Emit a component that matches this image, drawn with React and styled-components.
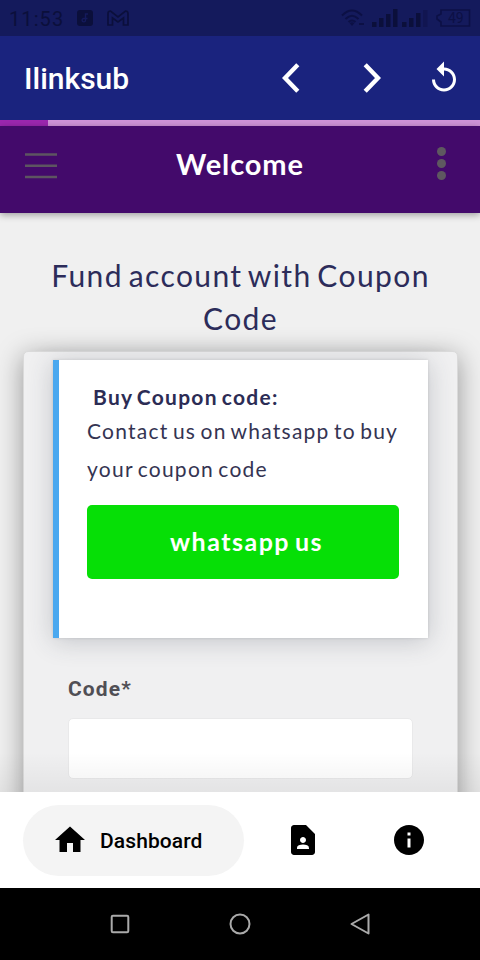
import React from 'react';
import styled, { createGlobalStyle } from 'styled-components';
import { MdContactPage, MdHome, MdInfo, MdReplay } from 'react-icons/md';

const StatusBar = () => (
  <Status>
    <Clock>11:53</Clock>
    <svg width="16" height="16" viewBox="0 0 16 16">
      <rect width="16" height="16" rx="3" fill="#0b0f3b" />
      <path d="M11 4H8.5v6.2M8.500 10.2a1.7 1.7 0 1 1-1.7-1.7h3.7" fill="none" stroke="#141a5c" strokeWidth="1.4" />
    </svg>
    <MailIcon width="22" height="16" viewBox="0 0 22 16">
      <path d="M1 15V3.500Q1 1 3.500 1L11 7 18.500 1Q21 1 21 3.500V15H16.500V8L11 12 5.500 8V15Z" />
    </MailIcon>
    <StatusRight>
      <svg width="24" height="18" viewBox="0 0 24 18">
        <path d="M1 6.500Q11 -3.500 21 6.500M4.500 10Q11 3.500 17.500 10M7.500 13Q11 10 14.500 13" fill="none" stroke="#0c1045" strokeWidth="2" />
        <path d="M8.500 14Q11 12.500 13.500 14L11 17Z" fill="#0c1045" />
        <path d="M18 15h5" stroke="#0c1045" strokeWidth="2" />
      </svg>
      <SignalBars width="56" height="20" viewBox="0 0 56 20">
        <path d="M0 14h4.500v5H0zM7 10h4.500v9H7zM14 6h4.500v13H14zM21 1h4.500v18H21zM30 14h4.500v5H30zM37 10h4.500v9H37zM44 5h4.500v14H44z" />
        <path d="M51 2h4.500v17H51z" opacity=".35" />
      </SignalBars>
      <Battery>
        <svg width="35" height="18" viewBox="0 0 35 18">
          <path d="M5 1H33.500V17H5V13L1 10V7L5 5Z" fill="none" stroke="#0c1045" strokeWidth="1.6" />
        </svg>
        <BatteryLevel>49</BatteryLevel>
      </Battery>
    </StatusRight>
  </Status>
);

const Chevron = ({ flip }) => (
  <ChevronIcon width="18" height="30" viewBox="0 0 18 30" $flip={flip}>
    <path d="M15.800 1.800 3 15 15.800 28.200" fill="none" stroke="#fff" strokeWidth="4.400" />
  </ChevronIcon>
);

const Toolbar = () => (
  <AppBar>
    <AppTitle>Ilinksub</AppTitle>
    <Actions>
      <Chevron />
      <Chevron flip />
      <MdReplay size={36} />
    </Actions>
  </AppBar>
);

const PageHeader = () => (
  <Header>
    <MenuIcon width="32" height="28" viewBox="0 0 32 28">
      <path d="M0 2.500h32M0 13.800h32M0 25h32" />
    </MenuIcon>
    <HeaderTitle>Welcome</HeaderTitle>
    <Dots>
      <i />
      <i />
      <i />
    </Dots>
  </Header>
);

const App = () => (
  <>
    <GlobalStyle />
    <Screen>
      <StatusBar />
      <Toolbar />
      <Progress><ProgressValue /></Progress>
      <PageHeader />
      <Content>
        <Heading>Fund account with Coupon Code</Heading>
        <Panel>
          <Notice>
            <NoticeTitle>Buy Coupon code:</NoticeTitle>
            <NoticeText>Contact us on whatsapp to buy your coupon code</NoticeText>
            <WhatsappButton type="button">whatsapp us</WhatsappButton>
          </Notice>
          <Label htmlFor="code">Code*</Label>
          <Input id="code" />
        </Panel>
        <BottomShade />
      </Content>
      <BottomNav>
        <ActiveTab>
          <MdHome size={36} />
          <span>Dashboard</span>
        </ActiveTab>
        <Tab><MdContactPage size={36} /></Tab>
        <Tab><MdInfo size={36} /></Tab>
      </BottomNav>
      <SystemNav>
        <svg width="20" height="20" viewBox="0 0 20 20"><rect x="1.700" y="1.700" width="16.600" height="16.600" rx="1.200" /></svg>
        <svg width="22" height="22" viewBox="0 0 22 22"><circle cx="11" cy="11" r="9.500" /></svg>
        <svg width="20" height="22" viewBox="0 0 20 22"><path d="M18.500 1.500V20.500L1.500 11Z" /></svg>
      </SystemNav>
    </Screen>
  </>
);

export default App;

const GlobalStyle = createGlobalStyle`
  * {
    box-sizing: border-box;
  }
  body {
    margin: 0;
    background: #000;
  }
  svg {
    display: block;
    flex-shrink: 0;
  }
`;

const Screen = styled.div`
  width: 480px;
  height: 960px;
  display: flex;
  flex-direction: column;
  overflow: hidden;
  font-family: Lato, sans-serif;
  background: #f0f0f0;
`;

const Status = styled.div`
  height: 36px;
  flex: none;
  display: flex;
  align-items: center;
  padding: 0 9px;
  background: #141a5c;
`;

const Clock = styled.span`
  width: 68px;
  padding-top: 1px;
  font: 400 20px Roboto, sans-serif;
  letter-spacing: 1.1px;
  color: #0b0f3b;
`;

const MailIcon = styled.svg`
  margin-left: 14px;
  fill: none;
  stroke: #0b0f3b;
  stroke-width: 1.7;
`;

const StatusRight = styled.div`
  display: flex;
  align-items: center;
  margin-left: auto;
`;

const SignalBars = styled.svg`
  margin: 0 8px 0 7px;
  fill: #0b0f3b;
`;

const Battery = styled.div`
  position: relative;
`;

const BatteryLevel = styled.span`
  position: absolute;
  top: 1px;
  left: 12px;
  font: 400 14px/16px Roboto, sans-serif;
  color: #0c1045;
`;

const AppBar = styled.div`
  height: 84px;
  flex: none;
  display: flex;
  align-items: center;
  justify-content: space-between;
  padding: 0 18px 0 24px;
  background: #1a237e;
  color: #fff;
`;

const AppTitle = styled.div`
  font: 500 30px Roboto, sans-serif;
`;

const Actions = styled.div`
  display: flex;
  align-items: center;

  & > svg:nth-child(2) {
    margin: 0 45px 0 63px;
  }
`;

const ChevronIcon = styled.svg`
  transform: ${(props) => (props.$flip ? 'scaleX(-1)' : 'none')};
`;

const Progress = styled.div`
  height: 6px;
  flex: none;
  background: #ce93d8;
`;

const ProgressValue = styled.div`
  width: 10%;
  height: 100%;
  background: #9c27b0;
`;

const Header = styled.header`
  height: 87px;
  flex: none;
  display: flex;
  align-items: center;
  justify-content: space-between;
  padding: 0 34px 9px 25px;
  background: #430a6b;
  box-shadow: 0 2px 7px rgba(0, 0, 0, 0.35);
  position: relative;
  z-index: 1;
`;

const MenuIcon = styled.svg`
  margin-top: 2px;
  fill: none;
  stroke: #5d5561;
  stroke-width: 2.6;
`;

const HeaderTitle = styled.h1`
  margin: 0 14px 2px 0;
  font-size: 29px;
  line-height: 36px;
  font-weight: 700;
  letter-spacing: 0.9px;
  color: #fff;
`;

const Dots = styled.div`
  display: flex;
  flex-direction: column;
  gap: 3px;
  margin-bottom: 3px;

  i {
    width: 9px;
    height: 9px;
    border-radius: 50%;
    background: #5e5860;
  }
`;

const Content = styled.main`
  height: 579px;
  flex: none;
  overflow: hidden;
  padding: 41px 22px 0 23px;
  position: relative;
`;

const Heading = styled.h2`
  margin: 0 0 11px;
  font-size: 30px;
  line-height: 43px;
  font-weight: 400;
  letter-spacing: 1.4px;
  word-spacing: -0.11em;
  text-align: center;
  color: #2c2c5a;
`;

const Panel = styled.section`
  height: 600px;
  padding: 8px 28px 0 29px;
  border: 1px solid #dadada;
  border-radius: 5px;
  background: #f0f0f1;
  box-shadow: 0 5px 27px rgba(0, 0, 0, 0.38);
`;

const Notice = styled.div`
  width: 375px;
  height: 278px;
  padding: 21px 29px 0 28px;
  border-left: 6px solid #4aa8ef;
  background: #fff;
  box-shadow: 0 3px 24px rgba(50, 60, 75, 0.24), 0 0 3px rgba(0, 0, 0, 0.12);
`;

const NoticeTitle = styled.h3`
  margin: 0 0 0 6px;
  font-size: 21px;
  line-height: 32px;
  font-weight: 700;
  letter-spacing: 1.25px;
  word-spacing: -0.11em;
  color: #2c2c55;
`;

const NoticeText = styled.p`
  margin: -1px 0 17px;
  font-size: 21px;
  line-height: 38px;
  letter-spacing: 1.25px;
  word-spacing: -0.11em;
  color: #343452;
`;

const WhatsappButton = styled.button`
  width: 100%;
  height: 74px;
  padding: 0 0 2px 7px;
  border: 0;
  border-radius: 5px;
  background: #06df06;
  color: #fff;
  font: 700 25px Lato, sans-serif;
  letter-spacing: 1.5px;
  word-spacing: -0.11em;
`;

const Label = styled.label`
  display: block;
  margin: 37px 0 15px 15px;
  font: 700 21px/28px Roboto, sans-serif;
  letter-spacing: 1.1px;
  color: #504f55;
`;

const Input = styled.input`
  display: block;
  width: 345px;
  height: 61px;
  margin-left: 15px;
  border: 1px solid #e9e9ea;
  border-radius: 5px;
  background: #fff;
`;

// fade above the bottom navigation
const BottomShade = styled.div`
  position: absolute;
  left: 0;
  right: 0;
  bottom: 0;
  height: 40px;
  background: linear-gradient(transparent, rgba(0, 0, 0, 0.05));
`;

const BottomNav = styled.nav`
  height: 96px;
  flex: none;
  display: flex;
  align-items: center;
  padding: 0 18px 0 23px;
  background: #fff;
  color: #000;
`;

const ActiveTab = styled.div`
  width: 221px;
  height: 71px;
  display: flex;
  align-items: center;
  gap: 12px;
  margin-right: 6px;
  padding-left: 29px;
  border-radius: 36px;
  background: #f4f4f4;
  font: 500 21px Roboto, sans-serif;

  span {
    padding-top: 1px;
    letter-spacing: 0.1px;
  }
`;

const Tab = styled.div`
  width: 106px;
  display: flex;
  justify-content: center;
`;

const SystemNav = styled.nav`
  height: 72px;
  flex: none;
  display: flex;
  align-items: center;
  justify-content: space-between;
  padding: 0 110px;
  background: #000;

  svg {
    fill: none;
    stroke: #aaa;
    stroke-width: 2;
    stroke-linejoin: round;
  }
`;
